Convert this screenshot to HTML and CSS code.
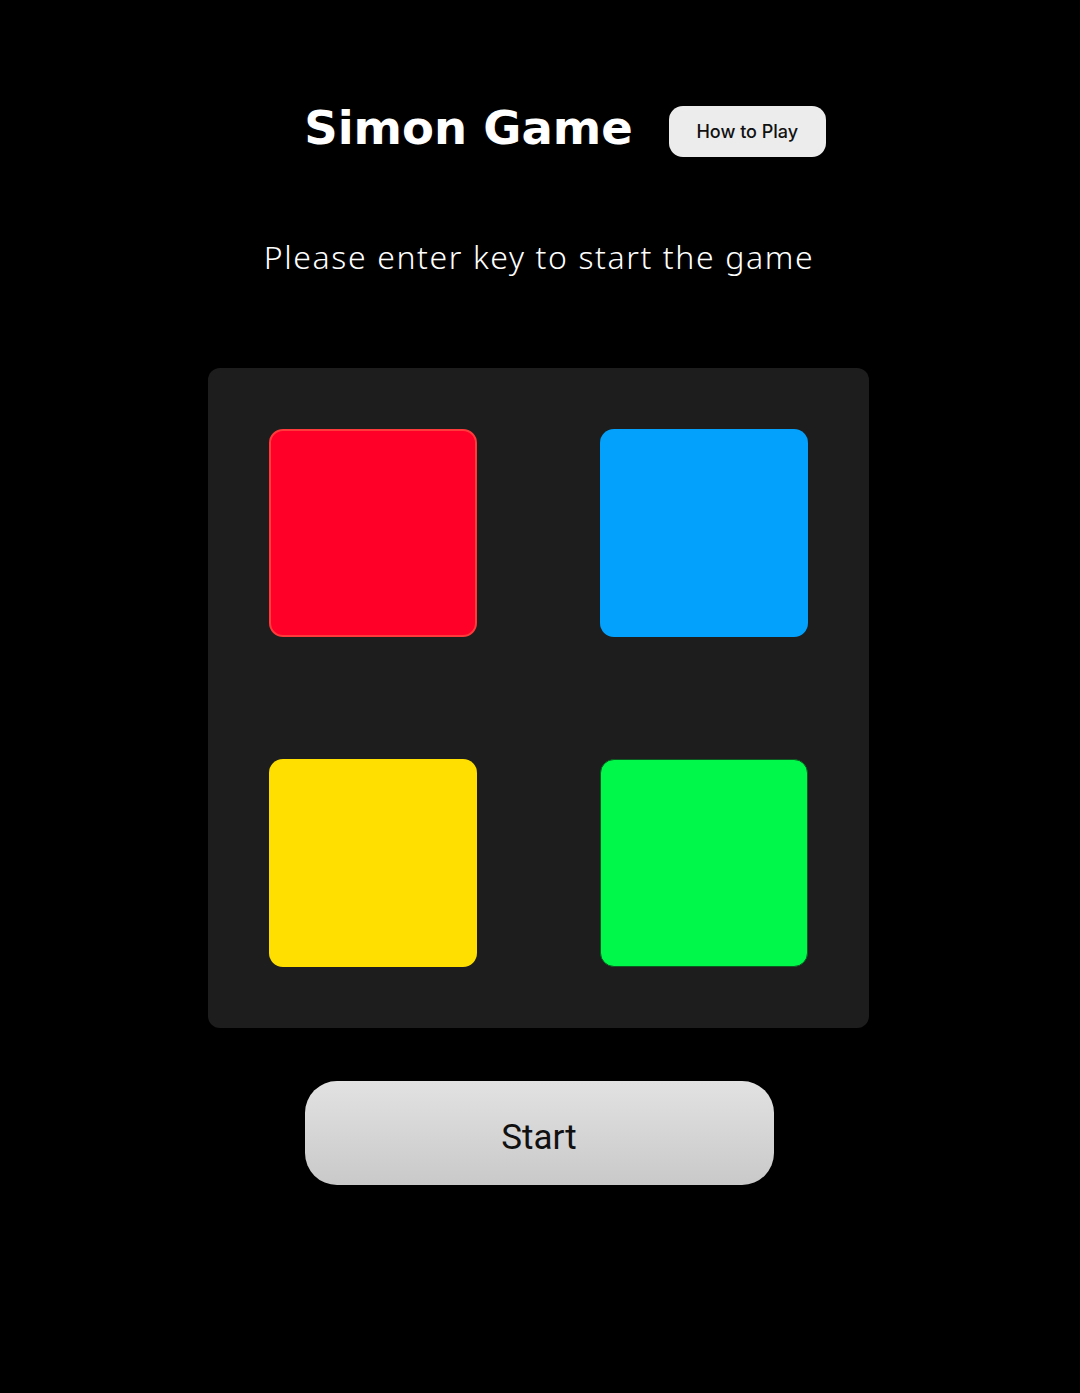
FILE: index.html
```html
<!DOCTYPE html>
<html lang="en">
<head>
<meta charset="utf-8">
<title>Simon Game</title>
<link rel="stylesheet" href="styles.css">
</head>
<body>
<main class="page">
  <header class="top">
    <h1 class="title">Simon Game</h1>
    <button class="help">How to Play</button>
  </header>
  <p class="status">Please enter key to start the game</p>
  <section class="board">
    <div class="pad red"></div>
    <div class="pad blue"></div>
    <div class="pad yellow"></div>
    <div class="pad green"></div>
  </section>
  <button class="start">Start</button>
</main>
</body>
</html>
```
FILE: styles.css
```css
html, body {
  margin: 0;
  padding: 0;
  background: #000;
}
.page {
  width: 1080px;
  height: 1393px;
  display: flex;
  flex-direction: column;
  align-items: center;
  color: #fff;
}
.top {
  display: flex;
  align-items: center;
  gap: 36px;
  margin-top: 96px;
  padding-left: 50px;
  height: 64px;
}
.title {
  margin: 0;
  font-family: "DejaVu Sans", sans-serif;
  font-weight: 700;
  font-size: 46.5px;
  line-height: 64px;
}
.help {
  margin-top: 7px;
  width: 157px;
  height: 51px;
  border: none;
  border-radius: 14px;
  background: #ececec;
  color: #111;
  font-family: "Inter", "Liberation Sans", sans-serif;
  font-weight: 500;
  font-size: 18px;
  padding: 0;
}
.status {
  margin: 77px 0 0 -2px;
  font-family: "Noto Sans", sans-serif;
  font-weight: 300;
  font-size: 32px;
  line-height: 40px;
  letter-spacing: 1.6px;
}
.board {
  margin: 91px 0 0 -3px;
  width: 661px;
  height: 660px;
  box-sizing: border-box;
  padding: 61px;
  background: #1c1d1c;
  border-radius: 12px;
  display: grid;
  grid-template-columns: 208px 208px;
  grid-template-rows: 208px 208px;
  justify-content: space-between;
  align-content: space-between;
}
.pad {
  border-radius: 14px;
  box-sizing: border-box;
}
.red {
  background: #ff0028;
  border: 2px solid #ff3a3a;
}
.blue { background: #03a1fc; }
.yellow { background: #ffdf00; }
.green {
  background: #00f84a;
  border: 1px solid #0b5a1f;
}
.start {
  margin: 53px 0 0 -2px;
  width: 469px;
  height: 104px;
  border: none;
  border-radius: 32px;
  background: linear-gradient(#e2e2e2, #c9c9c9);
  color: #111;
  font-family: "Roboto", "Noto Sans", sans-serif;
  font-size: 35px;
  padding: 8px 0 0;
}
```
